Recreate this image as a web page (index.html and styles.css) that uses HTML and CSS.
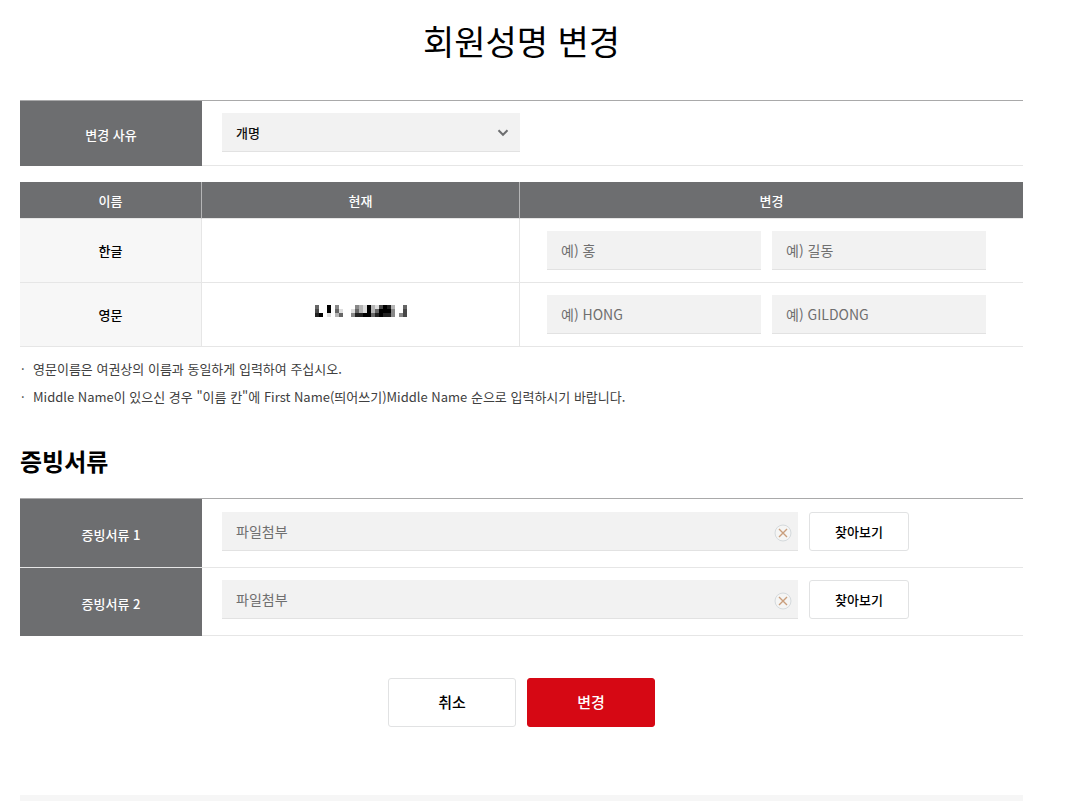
FILE: index.html
```
<!DOCTYPE html>
<html lang="ko">
<head>
<meta charset="utf-8">
<meta name="viewport" content="width=device-width, initial-scale=1">
<title>회원성명 변경</title>
<link rel="stylesheet" href="styles.css">
</head>
<body>
<main class="page">
  <h1 class="page-title">회원성명 변경</h1>
  <form class="form">
    <table class="form-table reason-table">
      <tbody>
        <tr>
          <th scope="row"><label for="reason">변경 사유</label></th>
          <td>
            <div class="select-box">
              <select id="reason" class="field"><option>개명</option></select>
              <svg class="chevron" viewBox="0 0 12 8" aria-hidden="true"><path d="M1.500 1.200 6 5.800l4.500-4.600"/></svg>
            </div>
          </td>
        </tr>
      </tbody>
    </table>

    <table class="name-table">
      <colgroup><col class="col-label"><col class="col-current"><col></colgroup>
      <thead>
        <tr><th scope="col">이름</th><th scope="col">현재</th><th scope="col">변경</th></tr>
      </thead>
      <tbody>
        <tr>
          <th scope="row">한글</th>
          <td></td>
          <td>
            <div class="name-fields">
              <input class="field" type="text" aria-label="한글 성" placeholder="예) 홍">
              <input class="field" type="text" aria-label="한글 이름" placeholder="예) 길동">
            </div>
          </td>
        </tr>
        <tr>
          <th scope="row">영문</th>
          <td class="current-name">
            <svg class="mosaic" viewBox="0 0 23 3" shape-rendering="crispEdges" aria-hidden="true">
              <path fill="#000" d="M1 2h1v1h-1zM3 0h1v2h-1zM12 2h1v1h-1zM13 0h1v3h-1zM16 1h3v1h-3zM17 0h1v1h-1zM16 2h1v1h-1z"/>
              <path fill="#222" d="M0 2h1v1h-1zM10 2h2v1h-2zM15 2h1v1h-1zM17 2h1v1h-1zM18 0h1v1h-1zM18 2h1v1h-1z"/>
              <path fill="#484848" d="M0 1h1v1h-1zM16 0h1v1h-1zM22 1h1v2h-1z"/>
              <path fill="#666" d="M0 0h1v1h-1zM5 1h1v1h-1zM6 2h1v1h-1zM10 1h1v1h-1zM14 2h1v1h-1zM15 1h1v1h-1zM22 0h1v1h-1z"/>
              <path fill="#888" d="M5 0h1v1h-1zM9 2h1v1h-1zM10 0h1v1h-1zM19 1h1v2h-1zM21 2h1v1h-1z"/>
              <path fill="#b5b5b5" d="M11 0h1v2h-1zM14 0h1v2h-1zM19 0h1v1h-1zM5 2h1v1h-1z"/>
              <path fill="#dedede" d="M6 1h1v1h-1zM9 1h1v1h-1zM12 0h1v2h-1zM15 0h1v1h-1zM3 2h1v1h-1z"/>
            </svg>
          </td>
          <td>
            <div class="name-fields">
              <input class="field" type="text" aria-label="영문 성" placeholder="예) HONG">
              <input class="field" type="text" aria-label="영문 이름" placeholder="예) GILDONG">
            </div>
          </td>
        </tr>
      </tbody>
    </table>

    <ul class="notes">
      <li>영문이름은 여권상의 이름과 동일하게 입력하여 주십시오.</li>
      <li>Middle Name이 있으신 경우 "이름 칸"에 First Name(띄어쓰기)Middle Name 순으로 입력하시기 바랍니다.</li>
    </ul>

    <h2 class="section-title">증빙서류</h2>
    <table class="form-table file-table">
      <tbody>
        <tr>
          <th scope="row"><label for="file1">증빙서류 1</label></th>
          <td>
            <div class="file-row">
              <div class="file-box">
                <input id="file1" class="field" type="text" placeholder="파일첨부">
                <button class="clear" type="button" aria-label="증빙서류 1 삭제"><svg viewBox="0 0 18 18"><circle cx="9" cy="9" r="8"/><path d="m5 5 8 8m0-8-8 8"/></svg></button>
              </div>
              <button class="btn btn-browse" type="button">찾아보기</button>
            </div>
          </td>
        </tr>
        <tr>
          <th scope="row"><label for="file2">증빙서류 2</label></th>
          <td>
            <div class="file-row">
              <div class="file-box">
                <input id="file2" class="field" type="text" placeholder="파일첨부">
                <button class="clear" type="button" aria-label="증빙서류 2 삭제"><svg viewBox="0 0 18 18"><circle cx="9" cy="9" r="8"/><path d="m5 5 8 8m0-8-8 8"/></svg></button>
              </div>
              <button class="btn btn-browse" type="button">찾아보기</button>
            </div>
          </td>
        </tr>
      </tbody>
    </table>

    <div class="actions">
      <button class="btn btn-large" type="button">취소</button>
      <button class="btn btn-large btn-primary" type="submit">변경</button>
    </div>
  </form>
  <div class="bottom-bar"></div>
</main>
</body>
</html>
```
FILE: styles.css
```
* { box-sizing: border-box; }

body {
  margin: 0;
  background: #fff;
  color: #000;
  font-family: "Noto Sans CJK KR", sans-serif;
  font-size: 13px;
  line-height: 20px;
}

input, select, button { font-family: inherit; margin: 0; }

.page { padding: 17px 50px 0 20px; }

.page-title {
  margin: 0 0 35px;
  font-size: 34px;
  line-height: 48px;
  font-weight: 400;
  text-align: center;
}

table {
  width: 100%;
  border-collapse: separate;
  border-spacing: 0;
  table-layout: fixed;
}

th, td { padding: 0; border-bottom: 1px solid #e6e6e6; }

th { font-weight: 500; text-align: center; }

.form-table { border-top: 1px solid #a9a9aa; }

.form-table th {
  width: 182px;
  padding-top: 4px;
  background: #6d6e70;
  color: #fff;
}

.form-table tr:last-child th { border-bottom-color: #6d6e70; }

.reason-table td { padding: 12px 20px 13px; }

.file-table td { padding: 13px 20px 16px; }

.file-table tr:last-child td { padding-top: 12px; }

.field {
  display: block;
  width: 100%;
  height: 39px;
  padding: 0 14px;
  border: 0;
  border-bottom: 1px solid #e2e2e2;
  border-radius: 0;
  background: #f2f2f2;
  color: #111;
  font-size: 14px;
}

.field::placeholder { color: #6f6f6f; opacity: 1; }

.select-box { position: relative; width: 298px; max-width: 100%; }

.select-box .field { appearance: none; font-size: 13px; font-weight: 500; }

.chevron {
  position: absolute;
  top: 16px;
  right: 11px;
  width: 12px;
  height: 8px;
  fill: none;
  stroke: #6d6e70;
  stroke-width: 2;
  pointer-events: none;
}

.name-table { margin-top: 16px; }

.col-label { width: 182px; }

.col-current { width: 318px; }

.name-table thead th {
  height: 37px;
  padding-top: 2px;
  background: #6d6e70;
  color: #fff;
}

.name-table th:not(:last-child),
.name-table td:not(:last-child) { border-right: 1px solid #e6e6e6; }

.name-table thead th:not(:last-child) { border-right-color: #b5b5b6; }

.name-table tbody th { background: #f7f7f7; }

.name-table tbody td:last-child { padding: 12px 37px 12px 27px; }

.name-fields { display: grid; grid-template-columns: 1fr 1fr; gap: 11px; }

.current-name { text-align: center; }

.mosaic { display: block; width: 92px; height: 12px; margin: 0 auto 8px; }

.notes {
  margin: 8px 0 0;
  padding: 0;
  list-style: none;
  color: #404040;
  line-height: 28px;
}

.notes li { display: flex; }

.notes li::before { content: "·"; flex: 0 0 12px; padding-left: 1px; }

.section-title {
  margin: 32px 0 19px;
  font-size: 24px;
  line-height: 36px;
  font-weight: 700;
}

.file-row { display: flex; gap: 11px; }

.file-box { position: relative; flex: 0 1 576px; min-width: 0; }

.file-box .field { padding-right: 36px; }

.clear {
  position: absolute;
  top: 12px;
  right: 6px;
  width: 18px;
  height: 18px;
  padding: 0;
  border: 0;
  background: none;
}

.clear svg { display: block; fill: none; }

.clear circle { fill: #f5f5f4; stroke: #d5dadd; }

.clear path { stroke: #c99e7c; stroke-width: 1.4; }

.btn {
  border: 1px solid #e1e2e3;
  border-radius: 3px;
  background: #fff;
  color: #000;
  font-size: 13px;
  font-weight: 500;
}

.btn-browse { flex: 0 0 100px; height: 39px; padding: 0; }

.actions {
  display: flex;
  justify-content: center;
  gap: 11px;
  margin: 42px 0 68px;
}

.btn-large { width: 128px; height: 49px; padding: 0 0 2px; font-size: 15px; }

.btn-primary { border-color: #d60814; background: #d60814; color: #fff; }

.bottom-bar { height: 6px; background: #f6f6f6; }
```
